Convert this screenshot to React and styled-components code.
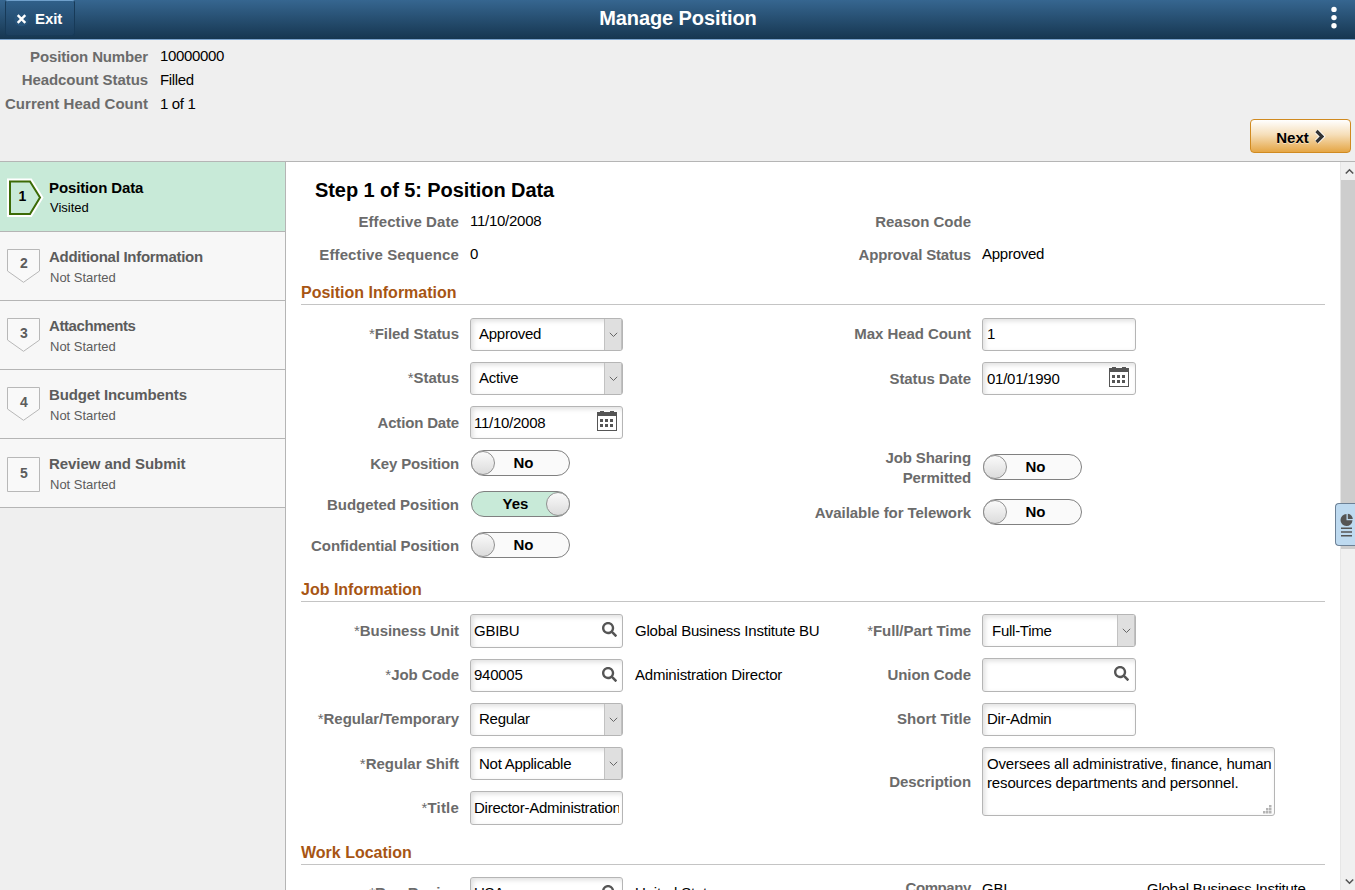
import React from "react";
import styled, { createGlobalStyle } from "styled-components";
import { FaSearch } from "react-icons/fa";

const GlobalStyle = createGlobalStyle`
  *{box-sizing:border-box;}
  body{
    margin:0;color:#000;background:#efefef;
    font-family:"Liberation Sans",Arial,sans-serif;font-size:15px;
  }
`

const Page = styled.div`
  display:flex;flex-direction:column;
  width:1355px;height:890px;overflow:hidden;
`

/* top bar */
const TopBar = styled.header`
  display:grid;grid-template-columns:76px 1fr 42px;
  flex:none;height:40px;color:#fff;
  background:linear-gradient(#366690 0,#163650 39px);
  border-bottom:1px solid #7ba3cc;
`
const ExitButton = styled.div`
  display:flex;align-items:center;
  height:36px;margin:0 1px 0 5px;padding:0 0 0 8px;
  font-weight:bold;letter-spacing:-0.1px;
  border:1px solid #173a58;border-top-color:#6fa0cc;
  border-radius:3px;
  background:linear-gradient(#30608a,#1c3f5e);
  svg{margin:1px 6px 0 0;}
`
const Title = styled.h1`
  margin:0;padding-right:33px;text-align:center;
  font-size:20px;line-height:36px;letter-spacing:-0.1px;
`
const Dots = styled.div`
  display:flex;justify-content:center;padding:6px 1px 0 0;
`

/* position summary */
const Summary = styled.section`
  display:flex;justify-content:space-between;
  flex:none;height:122px;padding:5px 4px 0 0;
  border-bottom:1px solid #b5b5b5;background:#efefef;
`
const SummaryList = styled.dl`
  display:grid;grid-template-columns:148px auto;column-gap:12px;
  grid-template-rows:23px 24px 24px;margin:0;line-height:23px;
`
const SummaryName = styled.dt`
  text-align:right;font-weight:bold;color:#6b6b6b;
  letter-spacing:${(p) => p.$ls || -0.14}px;
`
const SummaryValue = styled.dd`
  margin:0;letter-spacing:-0.33px;
  margin-top:${(p) => (p.$up ? -1 : 0)}px;
`
const NextButton = styled.div`
  display:flex;align-items:center;justify-content:center;gap:5px;
  width:101px;height:34px;margin-top:74px;
  padding:2px 0 0 1px;
  font-weight:bold;
  border:1px solid #d08a20;border-radius:4px;
  background:linear-gradient(#fff 0,#f6dfba 45%,#e5a645);
  text-shadow:0 1px 0 rgba(255,255,255,.5);
  svg{margin-top:-2px;}
`

/* steps */
const Body = styled.div`
  display:flex;flex:1;min-height:0;
`
const Steps = styled.nav`
  flex:none;width:286px;
  border-right:1px solid #b5b5b5;background:#efefef;
`
const Step = styled.div`
  display:flex;
  height:${(p) => (p.$active ? 70 : 69)}px;
  padding:${(p) => (p.$active ? 15 : 14)}px 0 0 6px;
  color:${(p) => (p.$active ? "#000" : "#5c5c5c")};
  background:${(p) => (p.$active ? "#c8ead8" : "#f7f7f7")};
  border-bottom:1px solid #b5b5b5;
  svg{flex:none;width:36px;height:42px;margin-right:7px;overflow:visible;}
`
const StepText = styled.div`
  font-weight:bold;line-height:22px;
  letter-spacing:${(p) => p.$ls}px;
  small{
    display:block;padding:${(p) => (p.$active ? 0 : 1)}px 0 0 1px;
    font-size:13px;font-weight:normal;line-height:18px;letter-spacing:0;
  }
`

/* form */
const Main = styled.main`
  flex:1;min-width:0;padding-left:15px;background:#fff;overflow:hidden;
`
const StepTitle = styled.h2`
  margin:0;padding:16px 0 0 14px;
  font-size:20px;line-height:24px;letter-spacing:-0.08px;
`
const Heading = styled.h3`
  width:1024px;height:${(p) => p.$h}px;margin:0;
  display:flex;align-items:flex-end;
  padding-bottom:2px;
  color:#a75513;font-size:16px;line-height:18px;
  border-bottom:1px solid #c4c4c4;
`
const Columns = styled.div`
  display:grid;grid-template-columns:512px 1fr;
  height:${(p) => p.$h}px;
  padding-top:${(p) => p.$top}px;
`
const Row = styled.div`
  display:flex;align-items:center;
  height:${(p) => p.$h || 33}px;
  margin-bottom:${(p) => p.$gap ?? 11}px;
`
const Label = styled.label`
  flex:none;width:158px;margin-right:11px;
  padding-top:${(p) => p.$down || 0}px;
  padding-bottom:${(p) => p.$up || 0}px;
  text-align:right;color:#6b6b6b;font-weight:bold;line-height:20px;
  letter-spacing:${(p) => p.$ls ?? -0.06}px;white-space:pre-line;
  i{font-style:normal;font-weight:normal;}
`
const Value = styled.span`
  padding-bottom:${(p) => p.$up || 0}px;
  letter-spacing:-0.26px;white-space:nowrap;
`
const Note = styled(Value)`
  margin-left:12px;letter-spacing:-0.2px;
`
const Box = styled.div`
  display:flex;align-items:center;flex:none;
  width:${(p) => (p.$wide ? 154 : 153)}px;height:100%;padding:0 3px;
  border:1px solid #b5b5b5;border-radius:3px;background:#fff;
  box-shadow:inset 2px 2px 5px rgba(0,0,0,.13);
  span{
    flex:1;overflow:hidden;white-space:nowrap;letter-spacing:-0.26px;
    padding-left:${(p) => (p.$wide ? 1 : 0)}px;
    padding-bottom:${(p) => p.$up || 0}px;
  }
  svg{flex:none;margin:-3px ${(p) => (p.$wide ? 3 : 2)}px 0 0;color:#555;}
`
const SelectBox = styled(Box)`
  padding:0 0 0 7px;
  span{padding-left:${(p) => (p.$wide ? 2 : 1)}px;}
`
const Arrow = styled.div`
  display:flex;align-items:center;justify-content:center;
  align-self:stretch;width:18px;
  background:#dfdfdf;border-left:1px solid #c2c2c2;
  border-right:1px solid #c0c0c0;
  svg{margin:0;}
`
const AreaBox = styled.div`
  display:flex;flex:none;justify-content:space-between;align-items:flex-end;
  width:293px;height:69px;
  border:1px solid #b5b5b5;border-radius:3px;
  box-shadow:inset 2px 2px 5px rgba(0,0,0,.13);
  p{align-self:flex-start;margin:0;padding:6px 0 0 4px;line-height:19px;white-space:pre;letter-spacing:-0.15px;}
  svg{flex:none;margin:0 2px 1px -12px;}
`
const Switch = styled.div`
  display:flex;align-items:center;flex-direction:${(p) => (p.$on ? "row-reverse" : "row")};
  width:99px;height:26px;margin-left:1px;
  border:1px solid #808080;border-radius:13px;
  background:${(p) => (p.$on ? "#c8ead8" : "#fafafa")};
  b{
    flex:1;text-align:center;
    padding:${(p) => (p.$on ? "0 0 2px 12px" : "0 16px 2px 0")};
  }
`
const Knob = styled.div`
  width:24px;height:24px;margin:0 -1px;
  border:1px solid #909090;border-radius:50%;
  background:linear-gradient(#fafafa,#dcdcdc);
`

/* scrollbar and side tab */
const Scroll = styled.div`
  display:flex;flex-direction:column;align-items:center;
  flex:none;width:15px;
  background:#f0f0f0;border-left:1px solid #e6e6e6;
  svg{flex:none;margin:6px 0 0 2px;}
`
const Thumb = styled.div`
  width:14px;height:369px;margin:5px 0 auto;background:#cdcdcd;
`
const SideTab = styled.div`
  position:absolute;left:1335px;top:503px;
  width:20px;height:43px;padding:9px 0 0 4px;
  border:1px solid #6c8196;border-right:0;border-radius:4px 0 0 4px;
  background:#bedaf0;
  svg{display:block;}
`

const steps = [
  { name: "Position Data", status: "Visited", ls: -0.12 },
  { name: "Additional Information", status: "Not Started", ls: -0.28 },
  { name: "Attachments", status: "Not Started", ls: -0.4 },
  { name: "Budget Incumbents", status: "Not Started", ls: -0.12 },
  { name: "Review and Submit", status: "Not Started", ls: -0.06 },
];

const Calendar = () => (
  <svg width="20" height="20" viewBox="0 0 20 20" fill="currentColor" shapeRendering="crispEdges">
    <path d="M0 1H3V0H7V1H13V0H17V1H20V20H0ZM1 5V19H19V5Z" fillRule="evenodd" />
    <path d="M3 8h3v3H3zM8 8h3v3H8zM13 8h3v3h-3zM3 13h3v3H3zM8 13h3v3H8zM13 13h3v3h-3z" />
  </svg>
);

function StepIcon({ n, active, last }) {
  let path = "M1.5 3.5H33.5V25L17.5 36.3L1.5 25Z";
  if (last) path = "M1.5 4.5H33.5V38.5H1.5Z";
  if (active) path = "M4 4.5H24L34 20.5L24 37H4Z";
  return (
    <svg viewBox="0 0 36 42">
      {active && <path d={path} fill="none" stroke="#fff" strokeWidth="6" />}
      <path
        d={path}
        fill={active ? "#c8ead8" : "#f9f9f9"}
        stroke={active ? "#3c6b06" : "#b8b8b8"}
        strokeWidth={active ? 2 : 1}
      />
      <text x={active ? 16.5 : 18} y={active ? 24 : last ? 25 : 22 + (n > 2 ? 1 : 0)} textAnchor="middle" fontSize="14" fontWeight="bold" fill="currentColor">
        {n}
      </text>
    </svg>
  );
}

function Field({ label, req, type, value, note, h, gap, wide, down, up, textUp, ls }) {
  return (
    <Row $h={h} $gap={gap}>
      <Label $down={down} $up={up} $ls={ls}>
        {req && <i>*</i>}
        {label}
      </Label>
      {type === "text" && <Value $up={textUp}>{value}</Value>}
      {type === "select" && (
        <SelectBox $wide={wide} $up={textUp}>
          <span>{value}</span>
          <Arrow>
            <svg width="9" height="6" viewBox="0 0 9 6">
              <path d="M.8 .8L4.5 4.5L8.2 .8" fill="none" stroke="#666" />
            </svg>
          </Arrow>
        </SelectBox>
      )}
      {(type === "input" || type === "date" || type === "lookup") && (
        <Box $wide={wide} $up={textUp}>
          <span>{value}</span>
          {type === "date" && <Calendar />}
          {type === "lookup" && <FaSearch size={15} />}
        </Box>
      )}
      {type === "switch" && (
        <Switch $on={value === "Yes"}>
          <Knob />
          <b>{value}</b>
        </Switch>
      )}
      {type === "area" && (
        <AreaBox>
          <p>{value}</p>
          <svg width="9" height="9" viewBox="0 0 9 9" fill="#b4b4b4">
            <path d="M6 0h2.5v2.5H6zM3 3h2.5v2.5H3zM6 3h2.5v2.5H6zM0 6h2.5v2.5H0zM3 6h2.5v2.5H3zM6 6h2.5v2.5H6z" />
          </svg>
        </AreaBox>
      )}
      {note && <Note $up={textUp}>{note}</Note>}
    </Row>
  );
}

const CompanyCode = styled(Value)`
  width:165px;
`

function App() {
  return (
    <>
      <GlobalStyle />
      <Page>
        <TopBar>
          <ExitButton>
            <svg width="15" height="16" viewBox="0 0 15 16">
              <circle cx="7.5" cy="8" r="7.3" fill="#28557c" />
              <path d="M3.7 4.2L11.3 11.8M11.3 4.2L3.7 11.8" stroke="#fff" strokeWidth="2.4" />
            </svg>
            Exit
          </ExitButton>
          <Title>Manage Position</Title>
          <Dots>
            <svg width="8" height="24" viewBox="0 0 8 24" fill="#fff">
              <circle cx="4" cy="3.4" r="2.7" />
              <circle cx="4" cy="11.6" r="2.7" />
              <circle cx="4" cy="19.8" r="2.7" />
            </svg>
          </Dots>
        </TopBar>

        <Summary>
          <SummaryList>
            <SummaryName>Position Number</SummaryName>
            <SummaryValue $up>10000000</SummaryValue>
            <SummaryName $ls={-0.08}>Headcount Status</SummaryName>
            <SummaryValue>Filled</SummaryValue>
            <SummaryName $ls={0.03}>Current Head Count</SummaryName>
            <SummaryValue>1 of 1</SummaryValue>
          </SummaryList>
          <NextButton>
            Next
            <svg width="12" height="17" viewBox="0 0 12 17" fill="none">
              <path d="M2.5 3L8 8.5L2.5 14" stroke="#fff" strokeWidth="5" />
              <path d="M2.5 3L8 8.5L2.5 14" stroke="#333" strokeWidth="3.2" />
            </svg>
          </NextButton>
        </Summary>

        <Body>
          <Steps>
            {steps.map((s, i) => (
              <Step key={s.name} $active={i === 0}>
                <StepIcon n={i + 1} active={i === 0} last={i === 4} />
                <StepText $ls={s.ls} $active={i === 0}>
                  {s.name}
                  <small>{s.status}</small>
                </StepText>
              </Step>
            ))}
          </Steps>

          <Main>
            <StepTitle>Step 1 of 5: Position Data</StepTitle>
            <Columns $h={78} $top={2}>
              <div>
                <Field label="Effective Date" type="text" value="11/10/2008" gap={0} down={2} ls={0.1} />
                <Field label="Effective Sequence" type="text" value="0" gap={0} down={2} ls={0.12} />
              </div>
              <div>
                <Field label="Reason Code" gap={0} down={2} ls={0} />
                <Field label="Approval Status" type="text" value="Approved" gap={0} down={2} ls={-0.17} />
              </div>
            </Columns>

            <Heading $h={25}>Position Information</Heading>
            <Columns $h={254} $top={13}>
              <div>
                <Field label="Filed Status" req type="select" value="Approved" up={2} textUp={2} />
                <Field label="Status" req type="select" value="Active" up={2} textUp={2} />
                <Field label="Action Date" type="date" value="11/10/2008" ls={-0.17} />
                <Field label="Key Position" type="switch" value="No" h={26} gap={15} down={2} ls={-0.17} />
                <Field label="Budgeted Position" type="switch" value="Yes" h={26} gap={15} down={2} ls={-0.03} />
                <Field label="Confidential Position" type="switch" value="No" h={26} gap={15} down={2} ls={-0.1} />
              </div>
              <div>
                <Field label="Max Head Count" type="input" value="1" wide up={2} textUp={2} />
                <Field label="Status Date" type="date" value="01/01/1990" wide gap={52} ls={-0.1} />
                <Field label={"Job Sharing\nPermitted"} type="switch" value="No" h={40} gap={12} down={2} ls={-0.1} />
                <Field label="Available for Telework" type="switch" value="No" h={26} down={2} />
              </div>
            </Columns>

            <Heading $h={43}>Job Information</Heading>
            <Columns $h={232} $top={12}>
              <div>
                <Field label="Business Unit" req type="lookup" value="GBIBU" note="Global Business Institute BU" h={34} textUp={2} />
                <Field label="Job Code" req type="lookup" value="940005" note="Administration Director" up={2} textUp={2} />
                <Field label="Regular/Temporary" req type="select" value="Regular" up={2} textUp={2} />
                <Field label="Regular Shift" req type="select" value="Not Applicable" ls={0} />
                <Field label="Title" req type="input" value="Director-Administration" h={34} textUp={2} ls={0.2} />
              </div>
              <div>
                <Field label="Full/Part Time" req type="select" value="Full-Time" wide />
                <Field label="Union Code" type="lookup" value="" wide h={34} />
                <Field label="Short Title" type="input" value="Dir-Admin" wide up={2} textUp={2} ls={0} />
                <Field label="Description" type="area" value={"Oversees all administrative, finance, human\nresources departments and personnel."} h={69} />
              </div>
            </Columns>

            <Heading $h={31}>Work Location</Heading>
            <Columns $h={60} $top={12}>
              <div>
                <Field label="Reg Region" req type="lookup" value="USA" note="United States" h={34} up={2} textUp={3} ls={0.06} />
              </div>
              <div>
                <Row $h={22}>
                  <Label $ls={-0.4}>Company</Label>
                  <CompanyCode>GBI</CompanyCode>
                  <Value>Global Business Institute</Value>
                </Row>
              </div>
            </Columns>
          </Main>

          <Scroll>
            <svg width="9" height="7" viewBox="0 0 9 7">
              <path d="M.8 5.5L4.5 1.8L8.2 5.5" fill="none" stroke="#555" strokeWidth="1.6" />
            </svg>
            <Thumb />
            <svg width="9" height="14" viewBox="0 0 9 14">
              <path d="M.8 3.5L4.5 7.2L8.2 3.5" fill="none" stroke="#555" strokeWidth="1.6" />
            </svg>
          </Scroll>
        </Body>

        <SideTab>
          <svg width="14" height="26" viewBox="0 0 14 26" fill="#555">
            <path d="M6.5 1A6 6 0 1 0 12.5 7.3H6.5Z" />
            <path d="M7.8 .8A6 6 0 0 1 12.8 6H7.8Z" />
            <path d="M1 14.5h11v1.5H1zM1 18.3h11v1.5H1zM1 22h11v1.5H1z" />
          </svg>
        </SideTab>
      </Page>
    </>
  );
}

export default App;
